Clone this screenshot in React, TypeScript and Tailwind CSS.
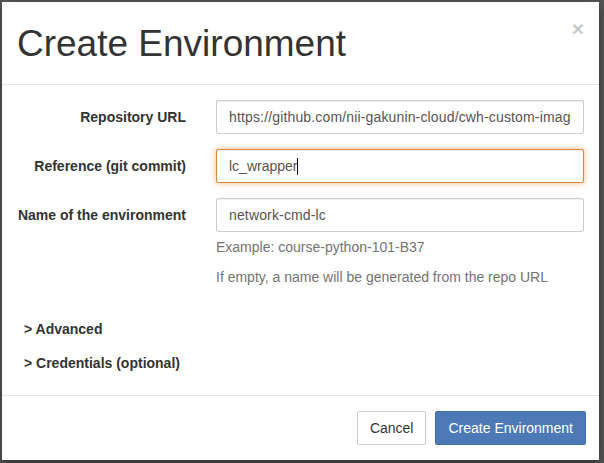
import React from 'react';

const font = { fontFamily: '"Liberation Sans", Arial, Helvetica, sans-serif' };

function Field({ label, value }: { label: string; value: string }) {
  return (
    <div className="flex mb-[15px]">
      <label className="w-[169px] h-[34px] flex items-center justify-end font-bold text-[14px] text-[#333]">
        {label}
      </label>
      <div className="ml-[30px] w-[368px]">
        <input
          readOnly
          value={value}
          className="w-full h-[34px] px-[12px] border border-[#ccc] rounded-[2px] text-[14px] tracking-[0.15px] text-[#555] bg-white shadow-[inset_0_1px_1px_rgba(0,0,0,0.075)] outline-none"
        />
      </div>
    </div>
  );
}

export default function App() {
  return (
    <div className="w-[604px] h-[463px] bg-[#575757] pt-[2px] pl-[2px] overflow-hidden" style={font}>
      <div className="w-[597px] h-[458px] bg-white flex flex-col shadow-[0_3px_9px_rgba(0,0,0,0.5)]">
        {/* Header */}
        <div className="flex items-start justify-between pl-[15px] pr-[15px] pt-[16px] pb-[20px] border-b border-[#e5e5e5]">
          <h1 className="mt-[6px] text-[37px] leading-[40px] font-normal text-[#333]">Create Environment</h1>
          <button className="text-[21px] leading-none font-bold text-[#c9c9c9]">×</button>
        </div>

        {/* Body */}
        <div className="px-[15px] pt-[15px] pb-[22px] flex-1">
          <Field label="Repository URL" value="https://github.com/nii-gakunin-cloud/cwh-custom-images" />

          <div className="flex mb-[15px]">
            <label className="w-[169px] h-[34px] flex items-center justify-end font-bold text-[14px] text-[#333]">
              Reference (git commit)
            </label>
            <div className="ml-[30px] w-[368px] h-[34px] px-[12px] flex items-center border border-[#e0873a] rounded-[2px] text-[14px] text-[#555] bg-white shadow-[inset_0_1px_1px_rgba(0,0,0,0.075),0_0_6px_rgba(232,135,50,0.6)]">
              <span>lc_wrapper</span>
              <span className="inline-block w-px h-[17px] bg-black" />
            </div>
          </div>

          <div className="flex">
            <label className="w-[169px] h-[34px] flex items-center justify-end font-bold text-[14px] text-[#333]">
              Name of the environment
            </label>
            <div className="ml-[30px] w-[368px]">
              <input
                readOnly
                value="network-cmd-lc"
                className="w-full h-[34px] px-[12px] border border-[#ccc] rounded-[2px] text-[14px] tracking-[0.15px] text-[#555] bg-white shadow-[inset_0_1px_1px_rgba(0,0,0,0.075)] outline-none"
              />
              <p className="mt-[5px] mb-[10px] text-[14px] leading-[20px] text-[#737373]">Example: course-python-101-B37</p>
              <p className="text-[14px] leading-[20px] text-[#737373]">If empty, a name will be generated from the repo URL</p>
            </div>
          </div>

          <div className="mt-[32px] pl-[7px] text-[14px] leading-[20px] font-bold text-[#333]">&gt; Advanced</div>
          <div className="mt-[14px] pl-[7px] text-[14px] leading-[20px] font-bold text-[#333]">&gt; Credentials (optional)</div>
        </div>

        {/* Footer */}
        <div className="border-t border-[#e5e5e5] pl-[15px] pr-[13px] pt-[15px] pb-[15px] flex justify-end gap-[9px]">
          <button className="h-[34px] px-[12px] border border-[#ccc] rounded-[2px] bg-white text-[14px] text-[#333]">Cancel</button>
          <button className="h-[34px] px-[12px] border border-[#4471ad] rounded-[2px] bg-[#4d7ab7] text-[14px] text-white">
            Create Environment
          </button>
        </div>
      </div>
    </div>
  );
}
